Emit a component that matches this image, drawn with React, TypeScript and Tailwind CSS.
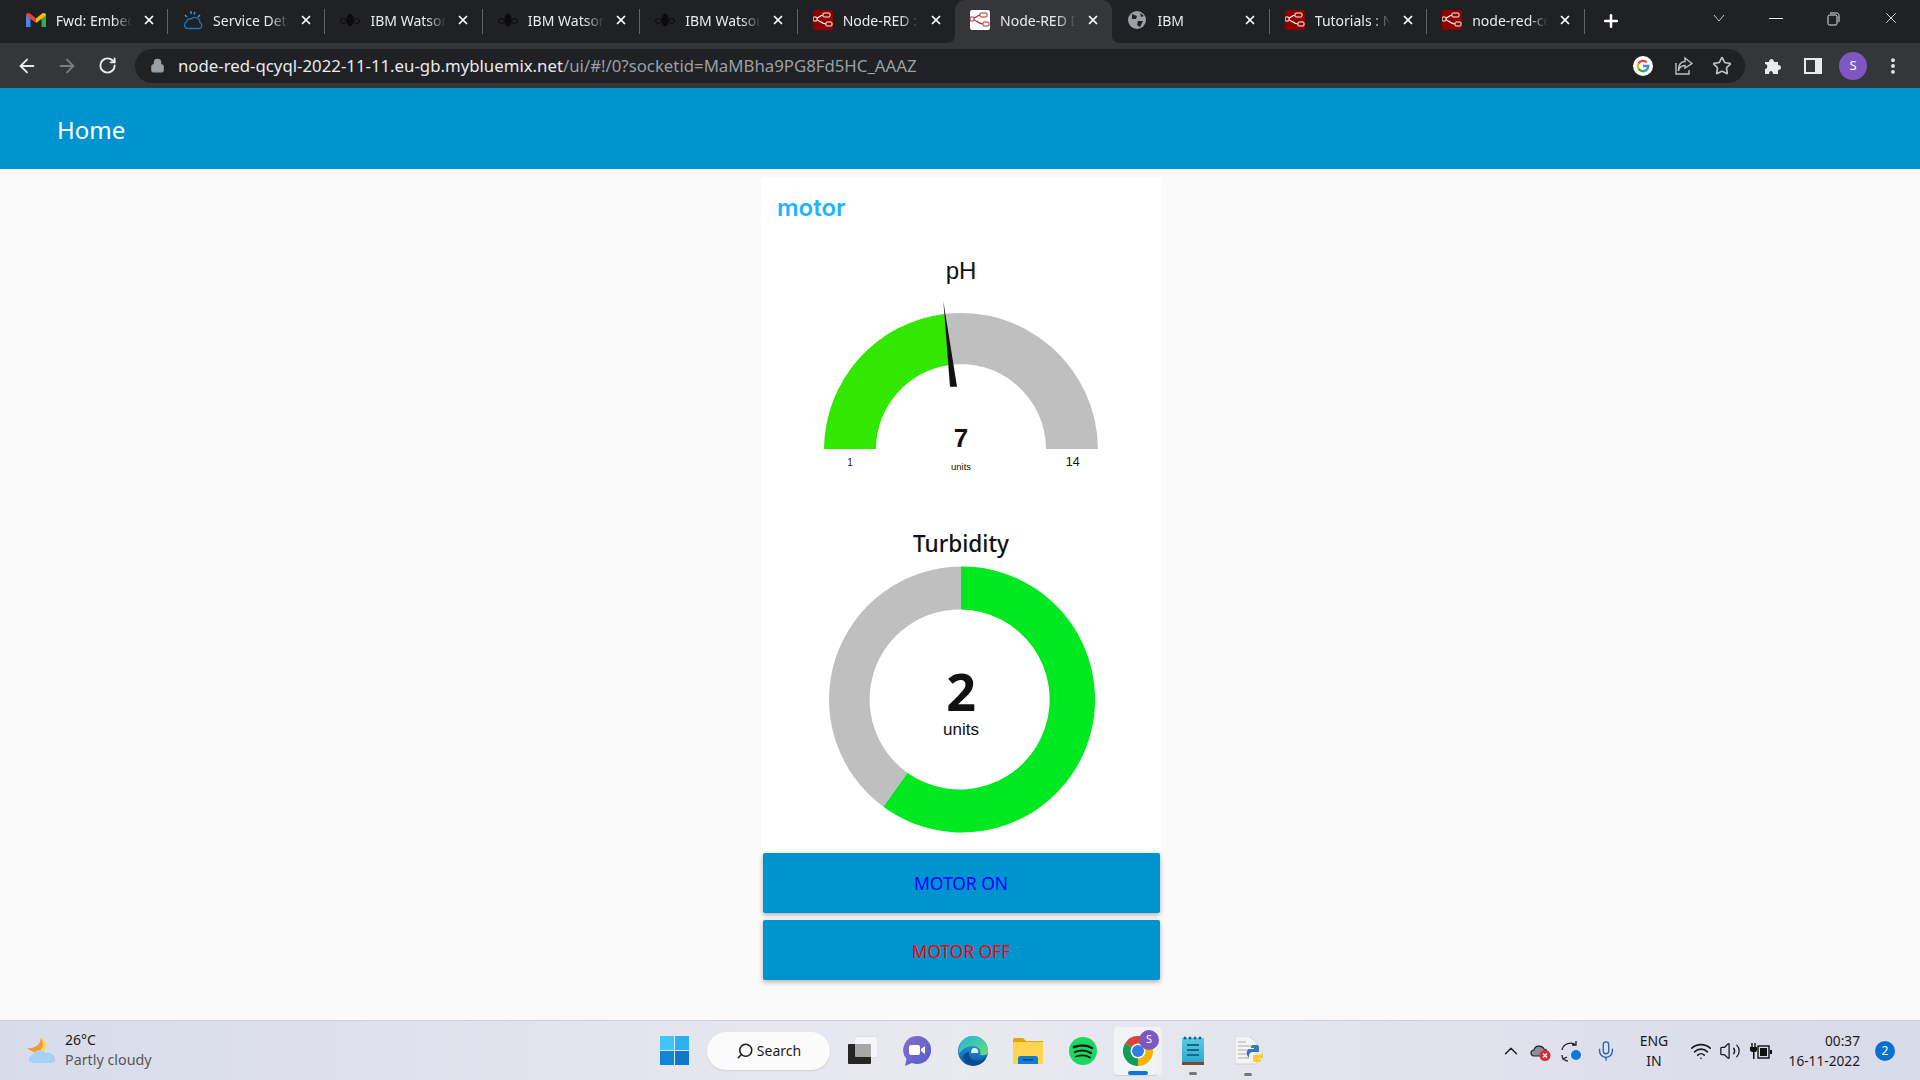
import { ArrowLeft, ArrowRight, ChevronUp, EllipsisVertical, Lock, Mic, Plus, RotateCw, Search, Star, Volume2, Wifi, X } from "lucide-react"

const Gmail = () => (
    <svg width="20" height="14" viewBox="0 0 20 14">
        <path d="M0 2 L0 14 L4.5 14 L4.5 5.5Z" fill="#4285f4" />
        <path d="M20 2 L20 14 L15.5 14 L15.5 5.5Z" fill="#34a853" />
        <path d="M0 2.5 C0 0 2.5 -.5 4 .6 L10 5.5 L10 10 Z" fill="#ea4335" />
        <path d="M10 5.5 L16 .6 C17.5 -.5 20 0 20 2.5 L10 10Z" fill="#fbbc04" />
    </svg>
)

const IbmCloud = () => (
    <svg width="20" height="20" viewBox="0 0 20 20" fill="none" stroke="#1f70c1" strokeWidth="1.3">
        <path d="M5 18.5 H15.5 C19 18.5 20 14 17 12.5 C17 8.5 11.5 5.5 8 9 C5 8 3.5 10.5 3.8 12 C.5 13 .5 18.5 5 18.5Z" />
        <path d="M2 5 L4 7 M8 1 V4 M12 2 L11 4.5 M17 5 L15 7" stroke="#3ea7d8" />
    </svg>
)

const Bee = () => (
    <svg width="20" height="14" viewBox="0 0 20 14" fill="#0b0b0b" stroke="#0b0b0b">
        <ellipse cx="10" cy="7" rx="3" ry="6" />
        <ellipse cx="3.5" cy="8" rx="3" ry="2.5" fill="none" />
        <ellipse cx="16.5" cy="8" rx="3" ry="2.5" fill="none" />
    </svg>
)

const NodeRed = ({ active }: { active?: boolean }) => {
    const bg = active ? "#ffffff" : "#8f0000"
    const fg = active ? "#a52a2a" : "#ffffff"
    return (
        <svg width="20" height="20" viewBox="0 0 20 20">
            <rect width="20" height="20" rx="2" fill={bg} />
            <path d="M1 9 C6 9 6 5 11 5 M1 9 C6 9 8 14 13 14" fill="none" stroke={fg} strokeWidth="1.2" />
            <rect x="10" y="3" width="7" height="4" rx="1" fill={bg} stroke={fg} />
            <rect x="13" y="12" width="6" height="4" rx="1" fill={bg} stroke={fg} />
            <rect x="0" y="7" width="4" height="4" rx="1" fill={bg} stroke={fg} />
        </svg>
    )
}

const Globe = () => (
    <svg width="18" height="18" viewBox="0 0 18 18">
        <circle cx="9" cy="9" r="9" fill="#9aa0a6" />
        <path d="M4 3 L9 5 L8 8 L4 8Z M10 10 L15 10 L12 16 L9 14Z M12 2 L16 5 L13 6Z" fill="#202124" />
    </svg>
)

const tabs = [
    { title: "Fwd: Embedded", icon: <Gmail /> },
    { title: "Service Details", icon: <IbmCloud /> },
    { title: "IBM Watson", icon: <Bee /> },
    { title: "IBM Watson", icon: <Bee /> },
    { title: "IBM Watson", icon: <Bee /> },
    { title: "Node-RED : Flow", icon: <NodeRed /> },
    { title: "Node-RED Dash", icon: <NodeRed active />, active: true },
    { title: "IBM", icon: <Globe /> },
    { title: "Tutorials : Node", icon: <NodeRed /> },
    { title: "node-red-contrib", icon: <NodeRed /> },
]

function Tab({ tab, index }: { tab: (typeof tabs)[number]; index: number }) {
    // no divider on either side of the active tab
    const showSep = index !== 5 && index !== 6
    return (
        <div className={"relative flex items-center h-full w-[157.4px] shrink-0 pb-[3px] " + (tab.active ? "bg-[#35363a] rounded-t-[10px]" : "")}>
            <div className="w-[20px] ml-[15px] flex items-center justify-center shrink-0">{tab.icon}</div>
            <div className="ml-[10px] w-[76px] overflow-hidden whitespace-nowrap text-[14px] text-[#e8eaed] [mask-image:linear-gradient(to_right,black_75%,transparent)]">{tab.title}</div>
            <X size={14} strokeWidth={3} className="ml-[10px] text-white shrink-0" />
            {showSep && <div className="absolute right-0 top-[9px] h-[25px] w-px bg-[#5f6368]" />}
            {tab.active && (
                <>
                    <svg className="absolute bottom-0 -left-[8px]" width="8" height="8" viewBox="0 0 8 8"><path d="M8 0 V8 H0 C5 8 8 5 8 0Z" fill="#35363a" /></svg>
                    <svg className="absolute bottom-0 -right-[8px]" width="8" height="8" viewBox="0 0 8 8"><path d="M0 0 V8 H8 C3 8 0 5 0 0Z" fill="#35363a" /></svg>
                </>
            )}
        </div>
    )
}

function TabStrip() {
    return (
        <div className="flex h-[43px] bg-[#202124] pl-[10.7px] shrink-0">
            {tabs.map((t, i) => <Tab key={i} tab={t} index={i} />)}
            <Plus size={20} strokeWidth={3} className="ml-[16px] mt-[11px] text-white shrink-0" />
            <svg className="ml-[91px] mt-[14px]" width="14" height="8" viewBox="0 0 14 8" fill="none" stroke="#bdc1c6"><path d="M2 1 L7 7 L12 1" /></svg>
            <div className="ml-[43px] mt-[18px] w-[14px] h-px bg-[#e8eaed]" />
            <svg className="ml-[43px] mt-[12px]" width="14" height="14" viewBox="0 0 14 14" fill="none" stroke="#e8eaed"><rect x="2" y="3" width="9" height="10" rx="1.5" /><path d="M4 1 H10.5 C12 1 13 2 13 3.5 V10" /></svg>
            <X size={18} strokeWidth={1.2} className="ml-[42px] mt-[9px] text-[#e8eaed]" />
        </div>
    )
}

function Toolbar() {
    return (
        <div className="flex items-center h-[45px] bg-[#35363a] pl-[7px] shrink-0">
            <div className="w-[40px] flex justify-center"><ArrowLeft size={22} className="text-[#e8eaed]" /></div>
            <div className="w-[40px] flex justify-center"><ArrowRight size={22} className="text-[#7b7e83]" /></div>
            <div className="w-[41px] flex justify-center"><RotateCw size={19} strokeWidth={2.4} className="text-[#e8eaed]" /></div>
            <div className="ml-[7px] flex items-center w-[1610px] h-[34px] rounded-full bg-[#202124] pl-[15px] pr-[13px]">
                <Lock size={15} fill="#9aa0a6" className="text-[#9aa0a6]" />
                <div className="ml-[13px] text-[16.8px] text-[#e8eaed] whitespace-nowrap">
                    node-red-qcyql-2022-11-11.eu-gb.mybluemix.net<span className="text-[#9aa0a6]">/ui/#!/0?socketid=MaMBha9PG8Fd5HC_AAAZ</span>
                </div>
                <svg className="ml-auto" width="20" height="20" viewBox="0 0 20 20" fill="none" strokeWidth="2.4">
                    <circle cx="10" cy="10" r="10" fill="#ffffff" />
                    <path d="M10 10 H15.2 A5.2 5.2 0 0 1 13.5 13.9" stroke="#4285f4" />
                    <path d="M13.5 13.9 A5.2 5.2 0 0 1 5.5 12.6" stroke="#34a853" />
                    <path d="M5.5 12.6 A5.2 5.2 0 0 1 5.5 7.4" stroke="#fbbc04" />
                    <path d="M5.5 7.4 A5.2 5.2 0 0 1 13.6 6.3" stroke="#ea4335" />
                </svg>
                <svg className="ml-[20px]" width="20" height="20" viewBox="0 0 20 20" fill="none" stroke="#bdc1c6" strokeWidth="1.4">
                    <path d="M3 7 V18 H16 V14" />
                    <path d="M12 2 L19 7.5 L12 12 V9.5 C8 9.5 6 12 5.5 15 C5 9 8 5.5 12 5.5Z" />
                </svg>
                <Star size={20} strokeWidth={2} className="ml-[19px] text-[#bdc1c6]" />
            </div>
            <div className="ml-[8px] w-[40px] flex justify-center">
                <svg width="18" height="18" viewBox="0 0 18 18" fill="#e8eaed"><path d="M1 5 H5 C5 1 10 1 10 5 H14 V8 C18 8 18 13 14 13 V17 H9 C9 13 5 13 5 17 H1 V12 C4 12 4 7 1 7Z" /></svg>
            </div>
            <div className="w-[40px] flex justify-center">
                <svg width="18" height="16" viewBox="0 0 18 16"><path d="M0 0 H18 V16 H0Z M2 2 V14 H11 V2Z" fillRule="evenodd" fill="#e8eaed" /></svg>
            </div>
            <div className="w-[40px] flex justify-center">
                <div className="w-[28px] h-[28px] rounded-full bg-[#7e57c2] flex items-center justify-center text-[13px] text-white">S</div>
            </div>
            <div className="w-[40px] flex justify-center"><EllipsisVertical size={20} strokeWidth={2.6} className="text-[#e8eaed]" /></div>
        </div>
    )
}

function Gauge() {
    return (
        <svg width="400" height="200" viewBox="0 0 400 200">
            <path d="M63 161 A137 137 0 0 1 183.3 26 L188 77 A85 85 0 0 0 115 161Z" fill="#33e800" />
            <path d="M183.3 26 A137 137 0 0 1 337 161 L285 161 A85 85 0 0 0 188 77Z" fill="#bfbfbf" />
            <polygon points="182.3,13 189,98.7 196,98.7" fill="#111111" />
            <text x="200" y="159" textAnchor="middle" fontFamily="'Liberation Sans', sans-serif" fontWeight="700" fontSize="26" fill="#111111">7</text>
            <text x="200" y="182" textAnchor="middle" fontFamily="'Liberation Sans', sans-serif" fontSize="9.5" fill="#111111">units</text>
            <text x="89" y="178" textAnchor="middle" fontFamily="'Liberation Sans', sans-serif" fontSize="10" fill="#111111">1</text>
            <text x="311.7" y="178" textAnchor="middle" fontFamily="'Liberation Sans', sans-serif" fontSize="12.5" fill="#111111">14</text>
        </svg>
    )
}

function Donut() {
    return (
        <svg width="400" height="280" viewBox="0 0 400 280">
            <path d="M200 6.5 A133 133 0 1 1 122.3 246.7 L146.3 212.7 A90 90 0 1 0 200 49.5Z" fill="#00e81f" />
            <path d="M122.3 246.7 A133 133 0 0 1 200 6.5 L200 49.5 A90 90 0 0 0 146.3 212.7Z" fill="#bfbfbf" />
            <text x="200" y="150.7" textAnchor="middle" fontFamily="'Noto Sans', sans-serif" fontWeight="700" fontSize="52" fill="#111111">2</text>
            <text x="200" y="175" textAnchor="middle" fontFamily="'Liberation Sans', sans-serif" fontSize="17" fill="#111111">units</text>
        </svg>
    )
}

function MotorButton({ label, color }: { label: string; color: string }) {
    return (
        <button className={"w-[397px] h-[60px] mx-auto rounded-[2px] bg-[#0094ce] text-[17.4px] shadow-[0_2px_5px_rgba(0,0,0,0.3)] " + color}>{label}</button>
    )
}

function Dashboard() {
    return (
        <main className="flex-1 flex justify-center bg-[#fafafa] pt-[8px]">
            <div className="w-[400px] ml-[2px] flex flex-col">
                <div className="h-[673px] bg-white flex flex-col items-center">
                    <div className="self-start pl-[16px] pt-[16px] text-[24px] leading-[30px] font-semibold text-[#1eb4ff] font-['Inter']">motor</div>
                    <div className="mt-[32px] mb-[1px] text-[24px] leading-[32px] text-[#111111] font-['Liberation_Sans']">pH</div>
                    <Gauge />
                    <div className="mt-[40px] text-[22.6px] leading-[32px] font-medium text-[#111111]">Turbidity</div>
                    <Donut />
                </div>
                <div className="mt-[3px] flex flex-col gap-[7px]">
                    <MotorButton label="MOTOR ON" color="text-[#0000ff]" />
                    <MotorButton label="MOTOR OFF" color="text-[#ff0000] pt-[2px]" />
                </div>
            </div>
        </main>
    )
}

const Weather = () => (
    <svg width="29" height="26" viewBox="0 0 29 26">
        <path d="M14 0 C19 4 19 11 13 14 C8 15 3 13 0 10 C7 11 13 8 14 0Z" fill="#f59a23" />
        <path d="M14 0 C20 3 21 10 16 13 L12 14 C16 10 17 5 14 0Z" fill="#ffd35c" />
        <path d="M6 25 C0 25 1 17 6 17 C7 12 15 10 18 15 C23 13 29 18 28 22 C28 24 26 25 24 25Z" fill="#a8d0f2" />
    </svg>
)

const Teams = () => (
    <svg width="28" height="30" viewBox="0 0 28 30">
        <defs><linearGradient id="teamsBg" x1="0" y1="0" x2="1" y2="1"><stop offset="0" stopColor="#8c6cc8" /><stop offset="1" stopColor="#4f5fd0" /></linearGradient></defs>
        <path d="M14 0 A14 14 0 1 1 9 27 L2 30 L3.5 23 A14 14 0 0 1 14 0Z" fill="url(#teamsBg)" />
        <rect x="6" y="9" width="11" height="10" rx="2" fill="#ffffff" />
        <path d="M18 13 L22 10 V18 L18 15Z" fill="#ffffff" />
    </svg>
)

const Edge = () => (
    <svg width="30" height="30" viewBox="0 0 30 30">
        <defs>
            <linearGradient id="edgeBody" x1="0" y1="0" x2="0" y2="1"><stop offset="0" stopColor="#2aa7e0" /><stop offset="1" stopColor="#0c59a4" /></linearGradient>
            <linearGradient id="edgeTop" x1="0" y1="0" x2="1" y2="1"><stop offset="0" stopColor="#1fb4e4" /><stop offset="1" stopColor="#6be06a" /></linearGradient>
        </defs>
        <circle cx="15" cy="15" r="15" fill="url(#edgeBody)" />
        <path d="M15 0 A15 15 0 0 1 30 15 C30 19 26 20 22 19 C24 14 20 10 15 10 C9 10 4 13 1 18 C0 8 6 0 15 0Z" fill="url(#edgeTop)" />
        <path d="M16 12 C19 12 21 14 20 17 L13 17 C13 14 14 12 16 12Z" fill="#e9ebf2" />
        <path d="M11 16 C10 24 18 27 28 22 C24 31 8 33 5 22 C5 19 8 16 11 16Z" fill="#0a4c94" />
    </svg>
)

const Folder = () => (
    <svg width="30" height="26" viewBox="0 0 30 26">
        <path d="M0 2 C0 .5 1 0 2 0 H10 L13 3 H30 V8 H0Z" fill="#e2a40e" />
        <rect y="4" width="30" height="22" rx="1" fill="#ffd44f" />
        <path d="M5 25 V20 C5 19 6 18 7 18 H23 C24 18 25 19 25 20 V26 H5Z" fill="#0f7fd6" />
        <rect x="10" y="21" width="10" height="1.4" fill="#063d74" />
    </svg>
)

const Spotify = () => (
    <svg width="28" height="28" viewBox="0 0 28 28" fill="none" stroke="#1a1a1a" strokeLinecap="round">
        <circle cx="14" cy="14" r="14" fill="#1ed760" stroke="none" />
        <path d="M5 10 C11 8 18 8 23 11" strokeWidth="2.6" />
        <path d="M6 15 C11 13 17 13 22 16" strokeWidth="2.2" />
        <path d="M7 19.5 C12 18 17 18 21 20.5" strokeWidth="1.8" />
    </svg>
)

const Chrome = () => (
    <svg width="30" height="30" viewBox="1 1 30 30">
        <path d="M16 16 L3 8.5 A15 15 0 0 1 29 8.5Z" fill="#db4437" />
        <path d="M16 16 L29 8.5 A15 15 0 0 1 16 31Z" fill="#f4b400" />
        <path d="M16 16 L16 31 A15 15 0 0 1 3 8.5Z" fill="#0f9d58" />
        <circle cx="16" cy="16" r="7.5" fill="#ffffff" />
        <circle cx="16" cy="16" r="6" fill="#2f7de1" />
    </svg>
)

const Notepad = () => (
    <svg width="22" height="29" viewBox="0 0 22 29">
        <defs><linearGradient id="noteBg" x1="0" y1="0" x2="0" y2="1"><stop offset="0" stopColor="#5ccbe4" /><stop offset="1" stopColor="#2fa6cf" /></linearGradient></defs>
        <rect y="2" width="22" height="25" fill="url(#noteBg)" />
        <rect y="26" width="22" height="3" fill="#7a4a2a" />
        <path d="M5 9 H17 M5 14 H17 M5 19 H17" stroke="#0f6a8c" strokeWidth="2" />
        <g fill="#0f6a8c"><circle cx="3" cy="2" r="1.5" /><circle cx="8" cy="2" r="1.5" /><circle cx="13" cy="2" r="1.5" /><circle cx="18" cy="2" r="1.5" /></g>
    </svg>
)

const PythonFile = () => (
    <svg width="28" height="30" viewBox="0 0 28 30">
        <path d="M0 0 H14 L22 7 V28 H0Z" fill="#f4f4f4" stroke="#d0d0d0" />
        <path d="M3 6 H11 M3 10 H16 M3 14 H12 M3 18 H12 M3 22 H14" stroke="#c4c4c4" strokeWidth="1.4" />
        <path d="M18 9 H22 C24 9 24 11 24 13 V16 H18 C15 16 14 18 14 21 C11 21 11 13 14 13 H19 V12 H16 V11 C16 9.5 17 9 18 9Z" fill="#3a78b5" />
        <path d="M24 26 H20 C18 26 18 24 18 22 V19 H24 C27 19 28 17 28 14 C30 14 29 22 28 22 H23 V23 H26 V24 C26 25.5 25 26 24 26Z" fill="#fdc832" />
    </svg>
)

const OneDriveError = () => (
    <svg width="22" height="22" viewBox="0 0 22 22">
        <path d="M4 16 C0 16 0 10 4 10 C5 5 12 5 14 9 C17 9 18 13 16 16Z" fill="#8c8f96" stroke="#222222" strokeWidth="1.2" />
        <circle cx="15" cy="15.5" r="5.5" fill="#d92d34" />
        <path d="M13 13.5 L17 17.5 M17 13.5 L13 17.5" stroke="#ffffff" strokeWidth="1.4" />
    </svg>
)

const SyncDot = () => (
    <svg width="22" height="22" viewBox="0 0 22 22" fill="none" stroke="#222222" strokeWidth="1.3">
        <path d="M2 10 C3 4 11 1 16 5 M16 1 V5 H12" />
        <path d="M8 21 C4 21 2 18 2 15 M7 17 L3 19 L7 21" />
        <circle cx="16" cy="15" r="5" fill="#1478d8" stroke="none" />
    </svg>
)

const BatteryPlug = () => (
    <svg width="22" height="18" viewBox="0 0 22 18" fill="#111111">
        <path d="M2 1 V5 M5 1 V5" stroke="#111111" strokeWidth="1.4" />
        <path d="M0 5 H7 V8 C7 10 5 10 4.5 10 V17 H3 V10 C1 10 0 9 0 8Z" />
        <rect x="8" y="4" width="11" height="12" fill="none" stroke="#111111" strokeWidth="1.4" />
        <rect x="10" y="6" width="7" height="8" />
        <rect x="20" y="8" width="2" height="4" />
    </svg>
)

function Taskbar() {
    return (
        <footer className="flex items-center h-[60px] shrink-0 border-t border-[#cdd0da] bg-gradient-to-r from-[#d8dce9] via-[#e9eaf0] to-[#d8dbe8] text-[14px] text-[#1a1a1a]">
            <div className="w-[660px] shrink-0 flex items-center pl-[27px]">
                <Weather />
                <div className="ml-[9px] leading-[20px] -mt-[1px]">
                    <div>26°C</div>
                    <div className="text-[14.3px] text-[#555555]">Partly cloudy</div>
                </div>
            </div>
            <div className="w-[29px] h-[29px] grid grid-cols-2 gap-[1px] shrink-0">
                <div className="bg-[#41c5f5]" />
                <div className="bg-[#2fb0ee]" />
                <div className="bg-[#0f86d8]" />
                <div className="bg-[#0f78cc]" />
            </div>
            <div className="ml-[18px] w-[123px] h-[38px] rounded-full bg-[#fbfbfc] flex items-center justify-center gap-[3px] shadow-[0_1px_2px_rgba(0,0,0,0.1)]">
                <Search size={18} className="-scale-x-100" />
                <span>Search</span>
            </div>
            <div className="relative ml-[18px] w-[29px] h-[27px] shrink-0">
                <div className="absolute left-0 bottom-0 w-[23px] h-[20px] rounded-[1px] bg-[#252525]" />
                <div className="absolute right-0 top-0 w-[22px] h-[20px] rounded-[1px] bg-white/60 shadow-[0_0_1px_rgba(0,0,0,0.3)]" />
            </div>
            <div className="ml-[26px] shrink-0"><Teams /></div>
            <div className="ml-[27px] shrink-0"><Edge /></div>
            <div className="ml-[25px] shrink-0"><Folder /></div>
            <div className="ml-[26px] shrink-0"><Spotify /></div>
            <div className="relative ml-[17px] w-[48px] h-[48px] shrink-0 flex items-center">
                <div className="absolute inset-y-0 left-0 w-[48px] rounded-[4px] bg-[#f2f3f7]/70" />
                <div className="absolute inset-y-0 left-0 w-[43px] rounded-[4px] bg-[#f2f3f7] shadow-[0_1px_1px_rgba(0,0,0,0.1)]" />
                <div className="relative ml-[9px]"><Chrome /></div>
                <div className="absolute left-[25px] top-[3px] w-[20px] h-[20px] rounded-full bg-[#7e57c2] flex items-center justify-center text-[11px] text-white">S</div>
                <div className="absolute left-[14px] bottom-0 w-[20px] h-[4px] rounded-full bg-[#0a78d4]" />
            </div>
            <div className="relative ml-[20px] shrink-0">
                <Notepad />
                <div className="absolute left-[7px] top-[36px] w-[8px] h-[3px] rounded-full bg-[#777777]" />
            </div>
            <div className="relative ml-[31px] shrink-0">
                <PythonFile />
                <div className="absolute left-[9px] top-[37px] w-[8px] h-[3px] rounded-full bg-[#777777]" />
            </div>
            <ChevronUp size={22} strokeWidth={1.5} className="ml-[237px] shrink-0" />
            <div className="ml-[8px] shrink-0"><OneDriveError /></div>
            <div className="ml-[8px] shrink-0"><SyncDot /></div>
            <Mic size={22} strokeWidth={1.5} className="ml-[13px] text-[#2a62b8] shrink-0" />
            <div className="ml-[17px] w-[40px] text-center leading-[20px] shrink-0">
                <div>ENG</div>
                <div>IN</div>
            </div>
            <Wifi size={22} strokeWidth={1.8} className="ml-[16px] shrink-0" />
            <Volume2 size={22} strokeWidth={1.4} className="ml-[7px] shrink-0" />
            <div className="ml-[9px] shrink-0"><BatteryPlug /></div>
            <div className="ml-[8px] w-[80px] text-right leading-[20px] text-[13.7px] shrink-0">
                <div>00:37</div>
                <div>16-11-2022</div>
            </div>
            <div className="ml-[15px] w-[20px] h-[20px] rounded-full bg-[#0a70d0] flex items-center justify-center text-[12px] text-white shrink-0">2</div>
        </footer>
    )
}

export default function App() {
    return (
        <div className="flex flex-col h-screen overflow-hidden font-['Noto_Sans',sans-serif]">
            <TabStrip />
            <Toolbar />
            <header className="flex items-center h-[81px] shrink-0 bg-[#0094ce] pl-[57px] pt-[3px] text-[24px] text-white">Home</header>
            <Dashboard />
            <Taskbar />
        </div>
    )
}
